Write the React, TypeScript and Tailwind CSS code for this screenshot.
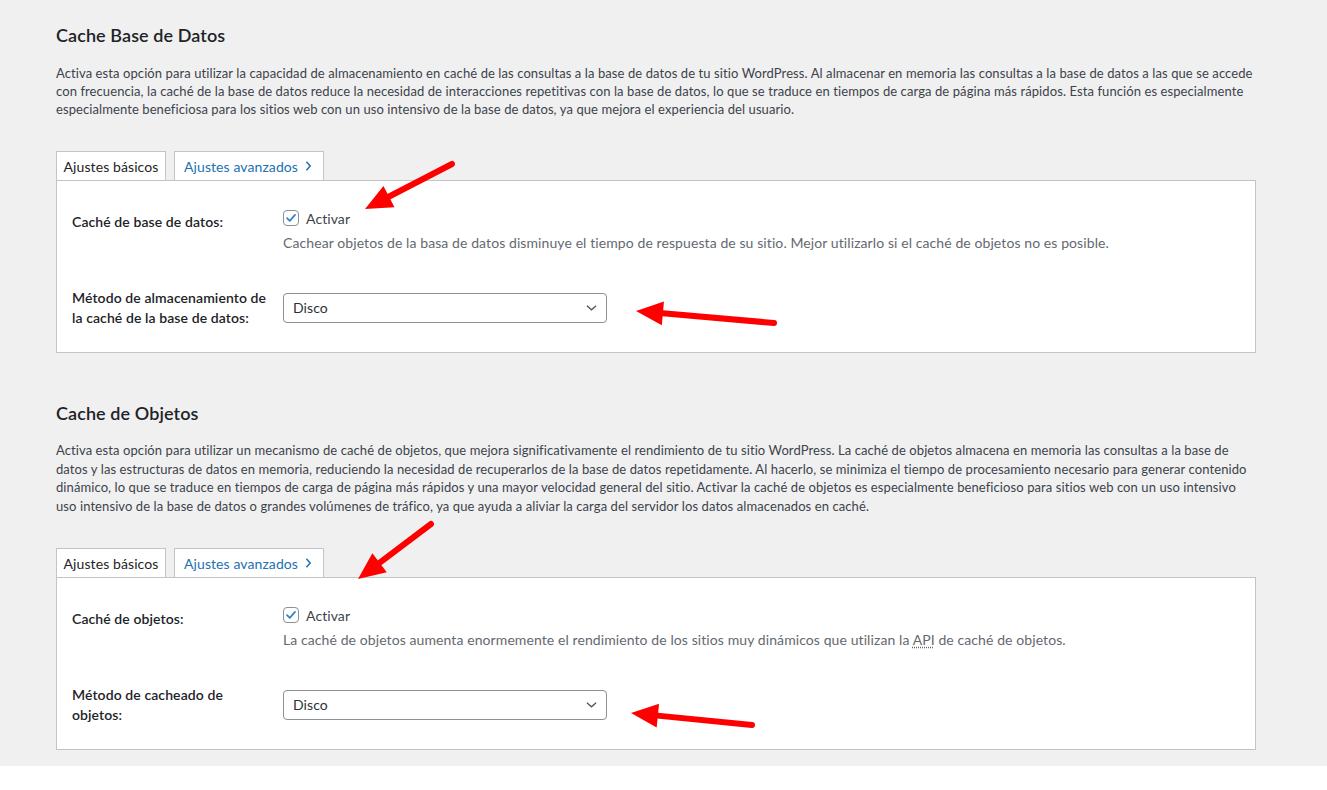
import React from 'react';

const font = { fontFamily: 'Lato, "Liberation Sans", sans-serif', letterSpacing: '0.09px' };

type ArrowProps = { x1: number; y1: number; x2: number; y2: number };

// red annotation arrow: tail (x1,y1) -> tip (x2,y2)
const Arrow = ({ x1, y1, x2, y2 }: ArrowProps) => {
  const dx = x2 - x1;
  const dy = y2 - y1;
  const len = Math.sqrt(dx * dx + dy * dy);
  const ux = dx / len;
  const uy = dy / len;
  const L = 27;
  const W = 12;
  const bx = x2 - ux * L;
  const by = y2 - uy * L;
  const px = -uy * W;
  const py = ux * W;
  return (
    <g>
      <line x1={x1} y1={y1} x2={bx + ux * 3} y2={by + uy * 3} stroke="#ff0000" strokeWidth={6} strokeLinecap="round" />
      <polygon points={`${x2},${y2} ${bx + px},${by + py} ${bx - px},${by - py}`} fill="#ff0000" />
    </g>
  );
};

const Checkbox = () => (
  <span className="inline-flex h-4 w-4 items-center justify-center rounded-[4px] border border-[#8c8f94] bg-white">
    <svg viewBox="0 0 16 16" className="h-[14px] w-[14px]">
      <path d="M3.5 8.2 L6.6 11.2 L12.6 4.4" fill="none" stroke="#3582c4" strokeWidth={2} strokeLinecap="round" strokeLinejoin="round" />
    </svg>
  </span>
);

const Select = () => (
  <div className="flex h-[30px] w-[324px] items-center justify-between rounded-[4px] border border-[#8c8f94] bg-white pl-[9px] pr-[9px] pb-[1px] text-[14px] text-[#2c3338]">
    <span>Disco</span>
    <svg viewBox="0 0 12 8" className="h-[8px] w-[11px]">
      <path d="M1 1.5 L6 6 L11 1.5" fill="none" stroke="#50575e" strokeWidth={1.4} />
    </svg>
  </div>
);

const Tabs = () => (
  <div className="mt-[33px] flex gap-2 pl-0">
    <div className="flex h-[29px] w-[110px] items-center justify-center border border-b-0 border-[#c3c4c7] bg-white text-[14px] text-[#1d2327]">
      Ajustes básicos
    </div>
    <div className="flex h-[29px] w-[150px] items-center border border-b-0 border-[#c3c4c7] bg-white pl-[9px] text-[14px] text-[#2271b1]">
      Ajustes avanzados
      <svg viewBox="0 0 8 12" className="ml-[7px] h-[10px] w-[7px]">
        <path d="M1.5 1 L6 6 L1.5 11" fill="none" stroke="#2271b1" strokeWidth={1.8} />
      </svg>
    </div>
  </div>
);

type PanelProps = {
  label1: string;
  description: React.ReactNode;
  label2: React.ReactNode;
};

const Panel = ({ label1, description, label2 }: PanelProps) => (
  <div className="h-[173px] border border-[#c3c4c7] bg-white">
    <div className="flex">
      <div className="w-[226px] pl-[15px] pt-[31px] text-[14px] font-semibold leading-[20px] text-[#1d2327]">{label1}</div>
      <div className="pt-[27px]">
        <label className="flex h-5 items-center gap-[7px] text-[14px] text-[#3c434a]">
          <Checkbox />
          Activar
        </label>
        <p className="mt-[5px] text-[14px] leading-[20px] text-[#646970]">{description}</p>
      </div>
    </div>
    <div className="flex">
      <div className="w-[226px] pl-[15px] pr-[11px] pt-[35px] text-[14px] font-semibold leading-[20px] text-[#1d2327]">{label2}</div>
      <div className="pt-[40px]">
        <Select />
      </div>
    </div>
  </div>
);

export default function App() {
  return (
    <div className="relative min-h-[790px] bg-white" style={font}>
      <div className="bg-[#f0f0f1] pb-4 pl-[56px] pt-[23px]">
        <div className="w-[1200px]">
          {/* Cache base de datos */}
          <h2 className="text-[18px] font-semibold leading-[24px] text-[#1d2327]">Cache Base de Datos</h2>
          <p className="mt-[17px] whitespace-nowrap text-[13px] leading-[18px] text-[#3c434a]">
            Activa esta opción para utilizar la capacidad de almacenamiento en caché de las consultas a la base de datos de tu sitio WordPress. Al almacenar en memoria las consultas a la base de datos a las que se accede
            <br />
            con frecuencia, la caché de la base de datos reduce la necesidad de interacciones repetitivas con la base de datos, lo que se traduce en tiempos de carga de página más rápidos. Esta función es especialmente
            <br />
            especialmente beneficiosa para los sitios web con un uso intensivo de la base de datos, ya que mejora el experiencia del usuario.
          </p>
          <Tabs />
          <Panel
            label1="Caché de base de datos:"
            description="Cachear objetos de la basa de datos disminuye el tiempo de respuesta de su sitio. Mejor utilizarlo si el caché de objetos no es posible."
            label2={<>Método de almacenamiento de la caché de la base de datos:</>}
          />

          {/* Cache de objetos */}
          <h2 className="mt-[48px] text-[18px] font-semibold leading-[24px] text-[#1d2327]">Cache de Objetos</h2>
          <p className="mt-[16px] whitespace-nowrap text-[13px] leading-[18.5px] text-[#3c434a]">
            Activa esta opción para utilizar un mecanismo de caché de objetos, que mejora significativamente el rendimiento de tu sitio WordPress. La caché de objetos almacena en memoria las consultas a la base de
            <br />
            datos y las estructuras de datos en memoria, reduciendo la necesidad de recuperarlos de la base de datos repetidamente. Al hacerlo, se minimiza el tiempo de procesamiento necesario para generar contenido
            <br />
            dinámico, lo que se traduce en tiempos de carga de página más rápidos y una mayor velocidad general del sitio. Activar la caché de objetos es especialmente beneficioso para sitios web con un uso intensivo
            <br />
            uso intensivo de la base de datos o grandes volúmenes de tráfico, ya que ayuda a aliviar la carga del servidor los datos almacenados en caché.
          </p>
          <Tabs />
          <Panel
            label1="Caché de objetos:"
            description={
              <>
                La caché de objetos aumenta enormemente el rendimiento de los sitios muy dinámicos que utilizan la{' '}
                <abbr className="underline decoration-dotted underline-offset-2">API</abbr> de caché de objetos.
              </>
            }
            label2={<>Método de cacheado de objetos:</>}
          />
        </div>
      </div>

      {/* annotation arrows */}
      <svg className="pointer-events-none absolute left-0 top-0" width={1327} height={790}>
        <Arrow x1={452} y1={164} x2={365} y2={209} />
        <Arrow x1={774} y1={323} x2={636} y2={311} />
        <Arrow x1={431} y1={524} x2={358} y2={579} />
        <Arrow x1={752} y1={725} x2={631} y2={713} />
      </svg>
    </div>
  );
}
